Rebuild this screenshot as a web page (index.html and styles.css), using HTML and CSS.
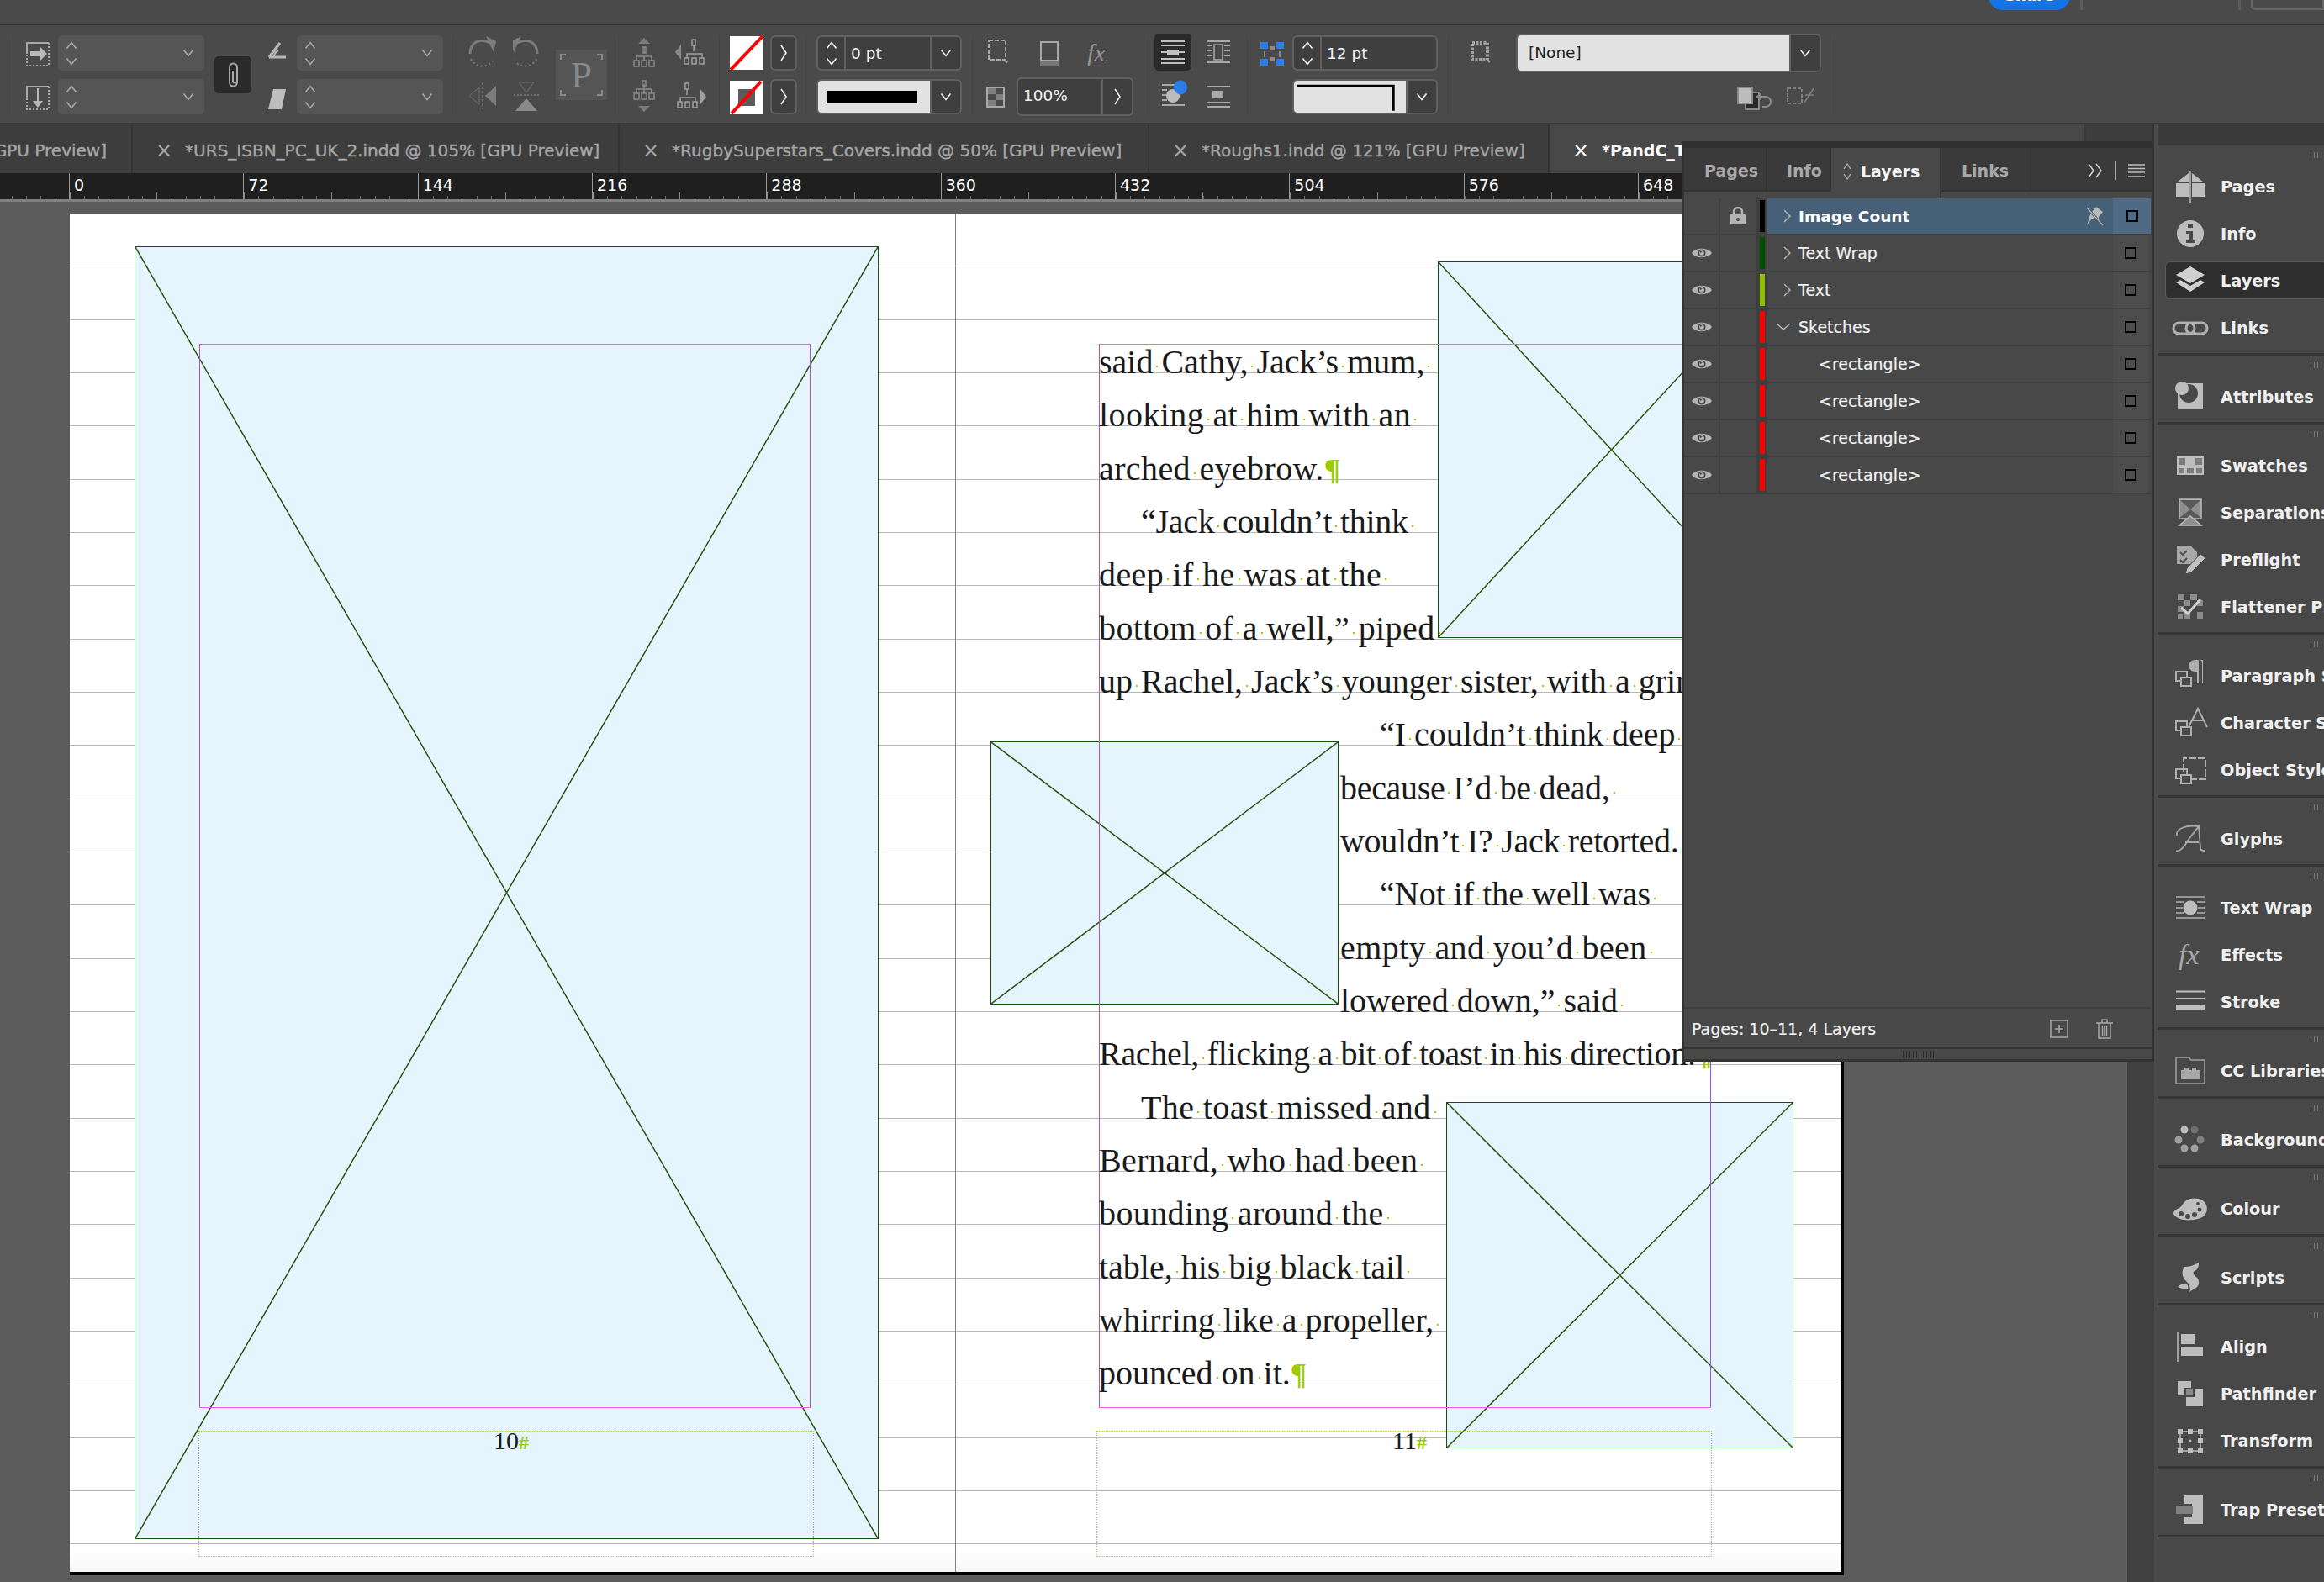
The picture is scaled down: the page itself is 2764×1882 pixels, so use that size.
FILE: index.html
```html
<!DOCTYPE html>
<html lang="en">
<head>
    <meta charset="UTF-8">
    <title>InDesign - Layers</title>
    <link rel="stylesheet" href="styles.css">
</head>
<body>
<svg class="defs" width="0" height="0">
    <symbol id="up" viewBox="0 0 14 10"><path d="M1.5 8.5L7 1.5l5.5 7" fill="none" stroke="currentColor" stroke-width="1.6"/></symbol>
    <symbol id="down" viewBox="0 0 14 10"><path d="M1.5 1.5L7 8.5l5.500-7" fill="none" stroke="currentColor" stroke-width="1.6"/></symbol>
    <symbol id="right" viewBox="0 0 10 22"><path d="M2 2l6 9-6 9" fill="none" stroke="currentColor" stroke-width="1.6"/></symbol>
    <symbol id="eye" viewBox="0 0 24 14"><path d="M0 7C5 0 19 0 24 7 19 14 5 14 0 7z" fill="#b4b4b4"/><circle cx="12" cy="7" r="4.600" fill="#484848"/><circle cx="12" cy="7" r="2.800" fill="#b4b4b4"/><circle cx="10.800" cy="5.800" r="1" fill="#484848"/></symbol>
</svg>

<div class="topbar">
    <div class="share">Share</div>
    <div class="top-div first"></div>
    <div class="top-div second"></div>
    <div class="search"></div>
</div>

<div class="controlbar">
    <div class="grp g1">
        <div class="col w28">
            <svg viewBox="0 0 28 42"><path d="M1 22V9h26" fill="none" stroke="#a8a8a8" stroke-width="2"/><path d="M27 9v27H1V22" fill="none" stroke="#a8a8a8" stroke-width="2" stroke-dasharray="2 2"/><path d="M5 19h12v-5l8 8-8 8v-5H5z" fill="#b8b8b8"/></svg>
            <svg viewBox="0 0 28 42"><path d="M1 22V9h26" fill="none" stroke="#a8a8a8" stroke-width="2"/><path d="M27 9v27H1V22" fill="none" stroke="#a8a8a8" stroke-width="2" stroke-dasharray="2 2"/><path d="M14 11v18" stroke="#b8b8b8" stroke-width="2"/><path d="M8 26h12l-6 8z" fill="#b8b8b8"/></svg>
        </div>
        <div class="col w174 ml10">
            <div class="dd"><div class="step"><svg><use href="#up"/></svg><svg><use href="#down"/></svg></div><svg class="chev"><use href="#down"/></svg></div>
            <div class="dd"><div class="step"><svg><use href="#up"/></svg><svg><use href="#down"/></svg></div><svg class="chev"><use href="#down"/></svg></div>
        </div>
        <div class="link ml12">
            <svg viewBox="0 0 44 44" width="44" height="44"><path d="M18 17v-4a4.500 4.500 0 0 1 9 0v16a2.500 2.500 0 0 1-5 0V17M27 27v4a4.500 4.500 0 0 1-9 0V16" fill="none" stroke="#a8a8a8" stroke-width="2"/></svg>
        </div>
        <div class="col w22 ml20">
            <svg viewBox="0 0 22 42"><path d="M1 26L14 9M1 26h20" fill="none" stroke="#b8b8b8" stroke-width="3"/><path d="M7 25c0-4 2-5 5-7" fill="none" stroke="#b8b8b8" stroke-width="2"/></svg>
            <svg viewBox="0 0 22 42"><path d="M6 12h15l-5 24H0z" fill="#bdbdbd"/></svg>
        </div>
        <div class="col w174 ml12">
            <div class="dd"><div class="step"><svg><use href="#up"/></svg><svg><use href="#down"/></svg></div><svg class="chev"><use href="#down"/></svg></div>
            <div class="dd"><div class="step"><svg><use href="#up"/></svg><svg><use href="#down"/></svg></div><svg class="chev"><use href="#down"/></svg></div>
        </div>
    </div>

    <div class="grp g2">
        <div class="col w35">
            <svg viewBox="0 0 35 42"><path d="M3 22C3 9 14 2 27 9" fill="none" stroke="#7c7c7c" stroke-width="3"/><path d="M22 1l12 6-3 13z" fill="#7c7c7c"/><path d="M4 28a15 15 0 0 0 26 2" fill="none" stroke="#7c7c7c" stroke-width="2" stroke-dasharray="2 3"/></svg>
            <svg viewBox="0 0 35 42"><path d="M18 4v32" stroke="#7c7c7c" stroke-width="1.500" stroke-dasharray="3 2"/><path d="M14 10v20L2 20z" fill="none" stroke="#6e6e6e" stroke-width="1"/><path d="M21 20l13-12v24z" fill="#7c7c7c"/></svg>
        </div>
        <div class="col w32 ml19">
            <svg viewBox="0 0 32 42"><path d="M29 22C29 9 18 2 5 9" fill="none" stroke="#7c7c7c" stroke-width="3"/><path d="M10 1L-2 7 1 20z" fill="#7c7c7c"/><path d="M28 28a15 15 0 0 1-26 2" fill="none" stroke="#7c7c7c" stroke-width="2" stroke-dasharray="2 3"/></svg>
            <svg viewBox="0 0 32 42"><path d="M7 4h18l-9 12z" fill="none" stroke="#6e6e6e" stroke-width="1"/><path d="M1 19h30" stroke="#7c7c7c" stroke-width="1.500" stroke-dasharray="2 2"/><path d="M16 23l13 15H3z" fill="#8a8a8a"/></svg>
        </div>
        <div class="pbox ml19">
            <svg class="corners" viewBox="0 0 61 60"><path d="M6 12V6h6M49 6h6v6M6 48v6h6M55 48v6h-6" fill="none" stroke="#8a8a8a" stroke-width="2"/></svg>
            <span>P</span>
        </div>
    </div>

    <div class="grp g3">
        <div class="col w26">
            <svg viewBox="0 0 26 42"><path d="M13 3l7 7H6z" fill="#7c7c7c"/><path d="M13 14v7M4 30v-5h18v5M13 25v5" fill="none" stroke="#8a8a8a" stroke-width="1.500"/><path d="M11 14h4v7h-4zM1 30h6v7H1zM10 30h6v7h-6zM19 30h6v7h-6z" fill="none" stroke="#8a8a8a" stroke-width="1.500"/></svg>
            <svg viewBox="0 0 26 42"><path d="M13 39l7-7H6z" fill="#7c7c7c"/><path d="M4 17v-5h18v5M13 6v11" fill="none" stroke="#8a8a8a" stroke-width="1.500"/><path d="M11 2h4v6h-4zM1 17h6v7H1zM10 17h6v7h-6zM19 17h6v7h-6z" fill="none" stroke="#8a8a8a" stroke-width="1.500"/></svg>
        </div>
        <div class="col w37 ml24">
            <svg viewBox="0 0 37 42"><path d="M0 20l7-9v18z" fill="#8a8a8a"/><path d="M22 12v7M14 27v-5h18v5" fill="none" stroke="#a0a0a0" stroke-width="1.500"/><path d="M20 5h4v7h-4zM11 27h5v7h-5zM20 27h5v7h-5zM29 27h5v7h-5z" fill="none" stroke="#a0a0a0" stroke-width="1.500"/></svg>
            <svg viewBox="0 0 37 42"><path d="M37 21l-7-9v18z" fill="#a0a0a0"/><path d="M14 12v7M6 27v-5h18v5" fill="none" stroke="#a0a0a0" stroke-width="1.500"/><path d="M12 5h4v7h-4zM3 27h5v7H3zM12 27h5v7h-5zM21 27h5v7h-5z" fill="none" stroke="#a0a0a0" stroke-width="1.500"/></svg>
        </div>
    </div>

    <div class="grp g4">
        <div class="col w40">
            <svg viewBox="0 0 40 42"><rect y="1" width="40" height="40" fill="#fff"/><path d="M1 41L39 1" stroke="#f00" stroke-width="4"/></svg>
            <svg viewBox="0 0 40 42"><rect y="2" width="40" height="40" fill="#fff"/><rect x="10" y="12" width="20" height="20" fill="#5c5c5c"/><path d="M2 41L37 3" stroke="#f00" stroke-width="4"/></svg>
        </div>
        <div class="col w32 ml8">
            <div class="field center"><svg class="arrow"><use href="#right"/></svg></div>
            <div class="field center"><svg class="arrow"><use href="#right"/></svg></div>
        </div>
    </div>

    <div class="grp g5">
        <div class="col w173">
            <div class="field">
                <div class="cell stepcell"><div class="step on"><svg><use href="#up"/></svg><svg><use href="#down"/></svg></div></div>
                <div class="value">0 pt</div>
                <div class="cell chevcell"><svg class="chev on"><use href="#down"/></svg></div>
            </div>
            <div class="field">
                <div class="value light"><span class="strokebar"></span></div>
                <div class="cell chevcell"><svg class="chev on"><use href="#down"/></svg></div>
            </div>
        </div>
    </div>

    <div class="grp g6">
        <div class="col w175">
            <div class="row">
                <svg class="ml2" width="24" viewBox="0 0 24 42"><rect x="1" y="6" width="20" height="23" fill="none" stroke="#a8a8a8" stroke-width="2" stroke-dasharray="5 2"/><path d="M20 31h4l-2 3z" fill="#a8a8a8"/></svg>
                <svg class="ml36" width="26" viewBox="0 0 26 42"><rect x="3" y="8" width="20" height="22" fill="none" stroke="#a8a8a8" stroke-width="2"/><path d="M2 31h22v6H2z" fill="#777"/></svg>
                <span class="fx ml32">fx<small>.</small></span>
            </div>
            <div class="row">
                <svg width="22" viewBox="0 0 22 42"><rect x="1" y="10" width="20" height="23" fill="none" stroke="#a8a8a8" stroke-width="2"/><path d="M2 11h9v7H2zM11 18h9v7h-9zM2 25h9v7H2z" fill="#808080"/></svg>
                <div class="field w139 ml14">
                    <div class="value">100%</div>
                    <div class="cell chevcell"><svg class="arrow"><use href="#right"/></svg></div>
                </div>
            </div>
        </div>
    </div>

    <div class="grp g7">
        <div class="col w44">
            <div class="wrapbtn">
                <svg viewBox="0 0 44 44" width="44" height="44"><path d="M8 9h28M8 35h28M8 14h28M8 30h28" stroke="#c0c0c0" stroke-width="2"/><path d="M15 19h14v6H15z" fill="#c0c0c0"/><path d="M8 22h7M29 22h7" stroke="#c0c0c0" stroke-width="2"/></svg>
            </div>
            <svg viewBox="0 0 44 42"><path d="M9 9h27M9 15h6M9 21h6M9 27h6M9 33h27" stroke="#a8a8a8" stroke-width="2"/><circle cx="22" cy="22" r="8" fill="#bcbcbc"/><ellipse cx="31" cy="12" rx="8" ry="8.500" fill="#2b7de9"/></svg>
        </div>
        <div class="col w28 ml18">
            <svg viewBox="0 0 28 42"><path d="M0 7h28M0 12h7M21 12h7M0 18h7M21 18h7M0 24h7M21 24h7M0 32h28" stroke="#a8a8a8" stroke-width="2"/><rect x="9" y="11" width="10" height="18" fill="none" stroke="#a8a8a8" stroke-width="1.500"/></svg>
            <svg viewBox="0 0 28 42"><path d="M0 9h28M0 28h28M0 33h28" stroke="#a8a8a8" stroke-width="2"/><rect x="7" y="14" width="13" height="9" fill="#a8a8a8"/></svg>
        </div>
    </div>

    <div class="grp g8">
        <div class="col w28">
            <svg viewBox="0 0 28 42"><path d="M0 8h9v8H0zM19 8h9v8h-9zM0 28h9v8H0zM19 28h9v8h-9z" fill="#2b7de9"/><path d="M12 13h5v5h-5zM12 26h5v5h-5z" fill="#8a8a8a"/><path d="M5 19v7M23 19v7" stroke="#8a8a8a" stroke-width="2"/></svg>
        </div>
        <div class="col w173 ml10">
            <div class="field">
                <div class="cell stepcell"><div class="step on"><svg><use href="#up"/></svg><svg><use href="#down"/></svg></div></div>
                <div class="value">12 pt</div>
            </div>
            <div class="field">
                <div class="value light">
                    <svg class="cornerprev" viewBox="0 0 135 38"><path d="M4 6h116v30" fill="none" stroke="#000" stroke-width="3"/></svg>
                </div>
                <div class="cell chevcell"><svg class="chev on"><use href="#down"/></svg></div>
            </div>
        </div>
    </div>

    <div class="grp g9">
        <div class="col w417">
            <div class="row">
                <svg width="24" viewBox="0 0 24 42"><rect x="2" y="9" width="18" height="20" fill="none" stroke="#a0a0a0" stroke-width="4" stroke-dasharray="3 1.500"/><path d="M20 30h4l-2 3z" fill="#a8a8a8"/></svg>
                <div class="field w363 ml30">
                    <div class="value light none">[None]</div>
                    <div class="cell chevcell"><svg class="chev on"><use href="#down"/></svg></div>
                </div>
            </div>
            <div class="row end">
                <svg width="41" viewBox="0 0 41 42"><rect x="10" y="16" width="16" height="20" fill="#2a2a2a" stroke="#8a8a8a" stroke-width="2"/><rect x="1" y="10" width="17" height="19" fill="#bcbcbc" stroke="#8a8a8a" stroke-width="2"/><path d="M24 21h10a6 6 0 0 1 0 12h-4" fill="none" stroke="#8a8a8a" stroke-width="2"/><path d="M29 16l-7 5 7 5z" fill="#8a8a8a"/></svg>
                <svg class="ml18" width="34" viewBox="0 0 34 42"><rect x="1" y="11" width="17" height="18" fill="none" stroke="#808080" stroke-width="2" stroke-dasharray="4 2"/><path d="M21 28l11-17M22 19h10" stroke="#808080" stroke-width="1.500"/></svg>
            </div>
        </div>
    </div>
</div>

<div class="workspace">
    <div class="main">
        <div class="tabs">
            <div class="tab cut"><span>[GPU Preview]</span></div>
            <div class="tab t2"><i>×</i><span>*URS_ISBN_PC_UK_2.indd @ 105% [GPU Preview]</span></div>
            <div class="tab t3"><i>×</i><span>*RugbySuperstars_Covers.indd @ 50% [GPU Preview]</span></div>
            <div class="tab t4"><i>×</i><span>*Roughs1.indd @ 121% [GPU Preview]</span></div>
            <div class="tab active"><i>×</i><span>*PandC_T</span></div>
            <div class="tab spare"></div>
        </div>
        <div class="ruler">
            <div class="rule-start"></div>
            <div class="rule">0</div><div class="rule">72</div><div class="rule">144</div><div class="rule">216</div><div class="rule">288</div>
            <div class="rule">360</div><div class="rule">432</div><div class="rule">504</div><div class="rule">576</div><div class="rule">648</div>
        </div>
        <div class="stage">
            <div class="canvas">
                <div class="page">
                    <div class="frame f-left"><svg viewBox="0 0 100 100" preserveAspectRatio="none"><path d="M0 0L100 100M100 0L0 100" vector-effect="non-scaling-stroke"/></svg></div>
                    <div class="frame f-top"><svg viewBox="0 0 100 100" preserveAspectRatio="none"><path d="M0 0L100 100M100 0L0 100" vector-effect="non-scaling-stroke"/></svg></div>
                    <div class="frame f-mid"><svg viewBox="0 0 100 100" preserveAspectRatio="none"><path d="M0 0L100 100M100 0L0 100" vector-effect="non-scaling-stroke"/></svg></div>
                    <div class="frame f-bot"><svg viewBox="0 0 100 100" preserveAspectRatio="none"><path d="M0 0L100 100M100 0L0 100" vector-effect="non-scaling-stroke"/></svg></div>

                    <div class="spine"></div>
                    <div class="margin m-left"></div>
                    <div class="margin m-right"></div>
                    <div class="folio-box b-left"></div>
                    <div class="folio-box b-right"></div>
                    <div class="folio n-left">10<b>#</b></div>
                    <div class="folio n-right">11<b>#</b></div>

                    <div class="story">
                        <p>said<i> </i>Cathy,<i> </i>Jack’s<i> </i>mum,<i> </i></p>
                        <p class="wide">looking<i> </i>at<i> </i>him<i> </i>with<i> </i>an<i> </i></p>
                        <p class="wide">arched<i> </i>eyebrow.<b>¶</b></p>
                        <p class="ind tight">“Jack<i> </i>couldn’t<i> </i>think<i> </i></p>
                        <p class="wide">deep<i> </i>if<i> </i>he<i> </i>was<i> </i>at<i> </i>the<i> </i></p>
                        <p class="wide">bottom<i> </i>of<i> </i>a<i> </i>well,”<i> </i>piped<i> </i></p>
                        <p>up<i> </i>Rachel,<i> </i>Jack’s<i> </i>younger<i> </i>sister,<i> </i>with<i> </i>a<i> </i>grin,<i> </i></p>
                        <p class="wrap-ind">“I<i> </i>couldn’t<i> </i>think<i> </i>deep<i> </i></p>
                        <p class="wrap tight">because<i> </i>I’d<i> </i>be<i> </i>dead,<i> </i></p>
                        <p class="wrap tight">wouldn’t<i> </i>I?<i> </i>Jack<i> </i>retorted.<i> </i></p>
                        <p class="wrap-ind">“Not<i> </i>if<i> </i>the<i> </i>well<i> </i>was<i> </i></p>
                        <p class="wrap wide">empty<i> </i>and<i> </i>you’d<i> </i>been<i> </i></p>
                        <p class="wrap">lowered<i> </i>down,”<i> </i>said<i> </i></p>
                        <p class="tight">Rachel,<i> </i>flicking<i> </i>a<i> </i>bit<i> </i>of<i> </i>toast<i> </i>in<i> </i>his<i> </i>direction.<b>¶</b></p>
                        <p class="ind wide">The<i> </i>toast<i> </i>missed<i> </i>and<i> </i></p>
                        <p class="wide">Bernard,<i> </i>who<i> </i>had<i> </i>been<i> </i></p>
                        <p class="wide">bounding<i> </i>around<i> </i>the<i> </i></p>
                        <p>table,<i> </i>his<i> </i>big<i> </i>black<i> </i>tail<i> </i></p>
                        <p>whirring<i> </i>like<i> </i>a<i> </i>propeller,<i> </i></p>
                        <p>pounced<i> </i>on<i> </i>it.<b>¶</b></p>
                    </div>
                </div>
            </div>
            <div class="scrollstrip"></div>
        </div>
    </div>

    <div class="dock">
        <div class="dock-head"></div>
        <div class="dgroup">
            <div class="ditem"><svg viewBox="0 0 42 42"><path d="M4 33V17h15v16zM23 33V17h15v16zM6 15l13-10v10zM36 15L23 5v10z" fill="#bdbdbd"/><path d="M21 2v38" stroke="#bdbdbd" stroke-width="1.500"/></svg>Pages</div>
            <div class="ditem"><svg viewBox="0 0 42 42"><circle cx="21" cy="21" r="16" fill="#bdbdbd"/><path d="M18 9h6v5h-6zM16 18h8v11h3v3H16v-3h3v-8h-3z" fill="#484848"/></svg>Info</div>
            <div class="ditem on"><svg viewBox="0 0 42 42"><path d="M21 4l17 10-17 10L4 14z" fill="#d0d0d0"/><path d="M9 20l12 7 12-7 5 3-17 11L4 23z" fill="#d0d0d0"/></svg>Layers</div>
            <div class="ditem"><svg viewBox="0 0 42 42"><rect x="1" y="15" width="25" height="13" rx="6.500" fill="none" stroke="#b0b0b0" stroke-width="3"/><rect x="16" y="15" width="25" height="13" rx="6.500" fill="none" stroke="#b0b0b0" stroke-width="3"/></svg>Links</div>
        </div>
        <div class="dgroup">
            <div class="ditem"><svg viewBox="0 0 42 42"><rect x="6" y="5" width="30" height="31" fill="#bdbdbd"/><circle cx="19" cy="17" r="11" fill="#484848"/><path d="M0 0h12v6H6v6H0z" fill="#484848"/><circle cx="11" cy="11" r="8" fill="#bdbdbd"/></svg>Attributes</div>
        </div>
        <div class="dgroup">
            <div class="ditem"><svg viewBox="0 0 42 42"><rect x="5" y="10" width="32" height="22" fill="#bdbdbd"/><path d="M7 12h8v8H7zM27 12h8v8h-8zM7 24h7v6H7zM17 24h8v6h-8zM28 24h7v6h-7z" fill="#7c7c7c"/></svg>Swatches</div>
            <div class="ditem"><svg viewBox="0 0 42 42"><path d="M8 5h26v22H8z" fill="#8f8f8f" stroke="#bdbdbd" stroke-width="1.500"/><path d="M9 6l12 11L33 6zM8 27l13-10 13 10" fill="#5a5a5a"/><path d="M8 36l13-11 13 11z" fill="#8f8f8f" stroke="#bdbdbd" stroke-width="1.500"/></svg>Separations</div>
            <div class="ditem"><svg viewBox="0 0 42 42"><path d="M5 4h16l8 8v14H5z" fill="#a8a8a8"/><path d="M9 12l3 3 5-5M9 21l3 3 5-5" fill="none" stroke="#484848" stroke-width="1.800"/><path d="M33 14l6 5-17 17-7 2 2-7z" fill="#c0c0c0" stroke="#484848" stroke-width="1"/></svg>Preflight</div>
            <div class="ditem"><svg viewBox="0 0 42 42"><path d="M6 6h8v7H6zM21 6h8v7h-8zM14 13h7v7h-7zM29 13h7v7h-7zM6 20h8v7H6zM14 27h7v8h-7zM29 27h7v8h-7zM6 30h6v5H6z" fill="#8a8a8a"/><path d="M10 22l8 7 15-17" fill="none" stroke="#d0d0d0" stroke-width="3"/></svg>Flattener Preview</div>
        </div>
        <div class="dgroup">
            <div class="ditem"><svg viewBox="0 0 42 42"><rect x="4" y="16" width="13" height="11" fill="none" stroke="#b0b0b0" stroke-width="2"/><rect x="10" y="23" width="12" height="10" fill="#484848" stroke="#b0b0b0" stroke-width="2"/><path d="M27 2h4v28h-2V16h-2c-10 0-10-14 0-14zM33 2h3v28h-1V4z" fill="#b0b0b0"/></svg>Paragraph Styles</div>
            <div class="ditem"><svg viewBox="0 0 42 42"><rect x="4" y="19" width="13" height="11" fill="none" stroke="#b0b0b0" stroke-width="2"/><rect x="10" y="26" width="12" height="10" fill="#484848" stroke="#b0b0b0" stroke-width="2"/><path d="M19 26L30 4l11 22M23 18h14" fill="none" stroke="#b0b0b0" stroke-width="2"/></svg>Character Styles</div>
            <div class="ditem"><svg viewBox="0 0 42 42"><path d="M13 23V7h26v25H22" fill="none" stroke="#b0b0b0" stroke-width="2" stroke-dasharray="9 2"/><rect x="4" y="20" width="13" height="11" fill="none" stroke="#b0b0b0" stroke-width="2"/><rect x="10" y="27" width="12" height="10" fill="#484848" stroke="#b0b0b0" stroke-width="2"/></svg>Object Styles</div>
        </div>
        <div class="dgroup">
            <div class="ditem"><svg viewBox="0 0 42 42"><path d="M5 17C3 9 16 4 31 6M4 35c5 2 10-5 14-12L31 6l2 26c0 2 2 3 5 3M15 25h16" fill="none" stroke="#a8a8a8" stroke-width="1.800"/></svg>Glyphs</div>
        </div>
        <div class="dgroup">
            <div class="ditem"><svg viewBox="0 0 42 42"><path d="M4 8h34M4 33h34M4 14h9M29 14h9M4 21h8M30 21h8M4 27h9M29 27h9" stroke="#b0b0b0" stroke-width="1.500"/><circle cx="21" cy="21" r="8.500" fill="#bdbdbd"/></svg>Text Wrap</div>
            <div class="ditem"><svg viewBox="0 0 42 42"><text class="glyph small" x="7" y="32">fx</text></svg>Effects</div>
            <div class="ditem"><svg viewBox="0 0 42 42"><path d="M4 8.500h34M4 17h34" stroke="#bdbdbd" stroke-width="2"/><path d="M4 27h34" stroke="#bdbdbd" stroke-width="6"/></svg>Stroke</div>
        </div>
        <div class="dgroup">
            <div class="ditem"><svg viewBox="0 0 42 42"><path d="M4 36V5h15l3 3h16v28z" fill="none" stroke="#a0a0a0" stroke-width="1.500"/><path d="M10 31V20h4v-3h5v3h4v-3h5v3h5v11z" fill="#a8a8a8"/></svg>CC Libraries</div>
        </div>
        <div class="dgroup">
            <div class="ditem"><svg viewBox="0 0 42 42"><circle cx="14" cy="9" r="4.500" fill="#bdbdbd"/><circle cx="26" cy="9" r="4.500" fill="#6e6e6e"/><circle cx="7" cy="21" r="4.500" fill="#a0a0a0"/><circle cx="33" cy="21" r="4.500" fill="#808080"/><circle cx="14" cy="31" r="4.500" fill="#a0a0a0"/><circle cx="26" cy="31" r="4.500" fill="#a0a0a0"/></svg>Background Tasks</div>
        </div>
        <div class="dgroup">
            <div class="ditem"><svg viewBox="0 0 42 42"><path d="M1 27c0-6 8-6 10-10 3-7 12-10 20-8 11 3 12 14 7 20-7 7-33 8-37-2z" fill="#bdbdbd"/><circle cx="10" cy="27" r="3" fill="#484848"/><circle cx="18" cy="30" r="3" fill="#484848"/><circle cx="26" cy="28" r="3" fill="#484848"/><circle cx="32" cy="22" r="2.500" fill="#484848"/><circle cx="30" cy="15" r="2" fill="#484848"/></svg>Colour</div>
        </div>
        <div class="dgroup">
            <div class="ditem"><svg viewBox="0 0 42 42"><path d="M14 8c6 0 12-2 17-5 0 5-1 8-5 10-3 2-1 5 3 8 3 3 3 9-1 12-3 2-6 3-8 5 2-5 0-9-4-13-5-5-6-11-2-17z" fill="#bdbdbd"/><path d="M6 32c3-3 7-5 11-4 1 3 2 5 1 7-4-1-8-1-12-3z" fill="#bdbdbd"/></svg>Scripts</div>
        </div>
        <div class="dgroup">
            <div class="ditem"><svg viewBox="0 0 42 42"><path d="M6 3v36" stroke="#bdbdbd" stroke-width="1.500"/><rect x="10" y="6" width="16" height="12" fill="#bdbdbd"/><rect x="10" y="21" width="26" height="11" fill="#bdbdbd"/></svg>Align</div>
            <div class="ditem"><svg viewBox="0 0 42 42"><path d="M6 6h16v8h-8v9H6z" fill="#bdbdbd"/><path d="M16 15h8v8h-8z" fill="#8a8a8a"/><path d="M26 15h10v21H16V25h10z" fill="#bdbdbd"/></svg>Pathfinder</div>
            <div class="ditem"><svg viewBox="0 0 42 42"><rect x="9" y="10" width="24" height="23" fill="none" stroke="#bdbdbd" stroke-width="1.500"/><path d="M6 7h6v6H6zM18 7h6v6h-6zM30 7h6v6h-6zM6 18h6v6H6zM30 18h6v6h-6zM6 30h6v6H6zM18 30h6v6h-6zM30 30h6v6h-6z" fill="#bdbdbd"/><circle cx="21" cy="21" r="1.500" fill="#bdbdbd"/></svg>Transform</div>
        </div>
        <div class="dgroup">
            <div class="ditem"><svg viewBox="0 0 42 42"><path d="M14 4h22v34H14v-8h9v-16h-9z" fill="#bdbdbd"/><rect x="4" y="16" width="20" height="10" fill="#808080"/></svg>Trap Presets</div>
        </div>
    </div>
</div>

<!-- floating layers panel, sits over the spread -->
<div class="panel">
    <div class="panel-strip"></div>
    <div class="ptabs">
        <div class="ptab p-pages">Pages</div>
        <div class="ptab p-info">Info</div>
        <div class="ptab p-layers">
            <svg width="10" height="22" viewBox="0 0 10 22"><path d="M1 8l4-6 4 6M1 14l4 6 4-6" fill="none" stroke="#b0b0b0" stroke-width="1.300"/></svg>
            Layers
        </div>
        <div class="ptab p-links">Links</div>
        <div class="ptab p-rest">
            <svg width="18" height="22" viewBox="0 0 18 22"><path d="M1 3l6 8-6 8M10 3l6 8-6 8" fill="none" stroke="#d0d0d0" stroke-width="1.500"/></svg>
            <span class="pbar"></span>
            <svg width="20" height="16" viewBox="0 0 20 16"><path d="M0 1h20M0 5.500h20M0 10h20M0 15h20" stroke="#c0c0c0" stroke-width="1.500"/></svg>
        </div>
    </div>
    <div class="rows">
        <div class="lrow sel">
            <div class="lcell eye"></div>
            <div class="lcell lock"><svg width="18" height="22" viewBox="0 0 18 22"><path d="M4 10V6a5 5 0 0 1 10 0v4" fill="none" stroke="#b4b4b4" stroke-width="2.400"/><rect y="9" width="18" height="12" rx="1" fill="#b4b4b4"/><circle cx="9" cy="15" r="2" fill="#484848"/></svg></div>
            <div class="lcell colour"><span class="black"></span></div>
            <div class="lname"><svg class="tw" viewBox="0 0 37 20"><path d="M20 3l7 7-7 7" fill="none" stroke="#b8b8b8" stroke-width="1.400"/></svg><strong>Image Count</strong>
                <svg class="nopin" width="21" height="24" viewBox="0 0 21 24"><path d="M12 1l8 6-5 6 0 4-8-2-6 8 3-10 2-5z" fill="#b8b8b8"/><path d="M1 2l19 21" stroke="#466078" stroke-width="3"/><path d="M1 2l19 21" stroke="#b8b8b8" stroke-width="1.200"/></svg>
            </div>
            <div class="lbox"><span></span></div>
        </div>
        <div class="lrow">
            <div class="lcell eye"><svg width="24" height="14"><use href="#eye"/></svg></div>
            <div class="lcell lock"></div>
            <div class="lcell colour"><span class="dkgreen"></span></div>
            <div class="lname"><svg class="tw" viewBox="0 0 37 20"><path d="M20 3l7 7-7 7" fill="none" stroke="#b8b8b8" stroke-width="1.400"/></svg>Text Wrap</div>
            <div class="lbox"><span></span></div>
        </div>
        <div class="lrow">
            <div class="lcell eye"><svg width="24" height="14"><use href="#eye"/></svg></div>
            <div class="lcell lock"></div>
            <div class="lcell colour"><span class="lime"></span></div>
            <div class="lname"><svg class="tw" viewBox="0 0 37 20"><path d="M20 3l7 7-7 7" fill="none" stroke="#b8b8b8" stroke-width="1.400"/></svg>Text</div>
            <div class="lbox"><span></span></div>
        </div>
        <div class="lrow">
            <div class="lcell eye"><svg width="24" height="14"><use href="#eye"/></svg></div>
            <div class="lcell lock"></div>
            <div class="lcell colour"><span class="red"></span></div>
            <div class="lname"><svg class="tw" viewBox="0 0 37 20"><path d="M11 6l8 7 8-7" fill="none" stroke="#b8b8b8" stroke-width="1.400"/></svg>Sketches</div>
            <div class="lbox"><span></span></div>
        </div>
        <div class="lrow">
            <div class="lcell eye"><svg width="24" height="14"><use href="#eye"/></svg></div>
            <div class="lcell lock"></div>
            <div class="lcell colour"><span class="red"></span></div>
            <div class="lname sub">&lt;rectangle&gt;</div>
            <div class="lbox"><span></span></div>
        </div>
        <div class="lrow">
            <div class="lcell eye"><svg width="24" height="14"><use href="#eye"/></svg></div>
            <div class="lcell lock"></div>
            <div class="lcell colour"><span class="red"></span></div>
            <div class="lname sub">&lt;rectangle&gt;</div>
            <div class="lbox"><span></span></div>
        </div>
        <div class="lrow">
            <div class="lcell eye"><svg width="24" height="14"><use href="#eye"/></svg></div>
            <div class="lcell lock"></div>
            <div class="lcell colour"><span class="red"></span></div>
            <div class="lname sub">&lt;rectangle&gt;</div>
            <div class="lbox"><span></span></div>
        </div>
        <div class="lrow">
            <div class="lcell eye"><svg width="24" height="14"><use href="#eye"/></svg></div>
            <div class="lcell lock"></div>
            <div class="lcell colour"><span class="red"></span></div>
            <div class="lname sub">&lt;rectangle&gt;</div>
            <div class="lbox"><span></span></div>
        </div>
    </div>
    <div class="pfoot">
        <span>Pages: 10–11, 4 Layers</span>
        <svg class="newlayer" width="22" height="22" viewBox="0 0 22 22"><rect x="1" y="1" width="20" height="20" fill="none" stroke="#a8a8a8" stroke-width="1.500"/><path d="M11 6v10M6 11h10" stroke="#a8a8a8" stroke-width="1.500"/></svg>
        <svg class="trash" width="20" height="24" viewBox="0 0 20 24"><path d="M0 5h20M7 5V1h6v4" fill="none" stroke="#a8a8a8" stroke-width="1.500"/><path d="M3 5v18h14V5M7.500 8v12M10 8v12M12.500 8v12" fill="none" stroke="#a8a8a8" stroke-width="1.500"/></svg>
    </div>
    <div class="pgrip"><span></span></div>
</div>
</body>
</html>
```

FILE: styles.css
```css
* {
    box-sizing: border-box;
}

html, body {
    margin: 0;
    width: 2764px;
    height: 1882px;
    overflow: hidden;
}

body {
    position: relative;
    background: #4a4a4a;
    font-family: "DejaVu Sans", sans-serif;
    color: #f0f0f0;
    display: flex;
    flex-direction: column;
}

.defs {
    position: absolute;
}

/* top strip */
.topbar {
    height: 30px;
    flex: none;
    display: flex;
    overflow: hidden;
    background: #4a4a4a;
    border-bottom: 2px solid #333;
}

.share {
    width: 101px;
    height: 34px;
    margin: -22px 0 0 2365px;
    background: #1473e6;
    border-radius: 17px;
    font-size: 18px;
    font-weight: bold;
    line-height: 34px;
    text-align: center;
    color: #fff;
}

.top-div {
    width: 3px;
    height: 12px;
    background: #5c5c5c;
}

.top-div.first {
    margin-left: 12px;
}

.top-div.second {
    margin-left: 185px;
}

.search {
    width: 90px;
    height: 12px;
    margin-left: 12px;
    border: 2px solid #666;
    border-top: 0;
    border-radius: 0 0 0 5px;
}

/* control panel */
.controlbar {
    height: 118px;
    flex: none;
    display: flex;
    padding: 12px 0 0 15px;
    background: #4a4a4a;
    border-bottom: 2px solid #393939;
}

.grp {
    height: 94px;
    display: flex;
    border-left: 1px solid #444;
}

.g1 { width: 523px; padding-left: 15px; }
.g2 { width: 193px; padding-left: 17px; }
.g3 { width: 124px; padding-left: 21px; }
.g4 { width: 103px; padding-left: 12px; }
.g5 { width: 198px; padding-left: 12px; }
.g6 { width: 204px; padding-left: 16px; }
.g7 { width: 123px; padding-left: 12px; }
.g8 { width: 239px; padding-left: 15px; }
.g9 { width: 455px; padding-left: 26px; border-right: 1px solid #444; }

.col {
    display: flex;
    flex-direction: column;
    gap: 10px;
    flex: none;
}

.col > * {
    height: 42px;
    flex: none;
}

.w22 { width: 22px; }
.w26 { width: 26px; }
.w28 { width: 28px; }
.w32 { width: 32px; }
.w35 { width: 35px; }
.w37 { width: 37px; }
.w40 { width: 40px; }
.w44 { width: 44px; }
.w139 { width: 139px; }
.w173 { width: 173px; }
.w174 { width: 174px; }
.w175 { width: 175px; }
.w363 { width: 363px; }
.w417 { width: 417px; }

.ml2 { margin-left: 2px; }
.ml8 { margin-left: 8px; }
.ml10 { margin-left: 10px; }
.ml12 { margin-left: 12px; }
.ml14 { margin-left: 14px; }
.ml18 { margin-left: 18px; }
.ml19 { margin-left: 19px; }
.ml20 { margin-left: 20px; }
.ml24 { margin-left: 24px; }
.ml30 { margin-left: 30px; }
.ml32 { margin-left: 32px; }
.ml36 { margin-left: 36px; }

.dd {
    display: flex;
    align-items: center;
    justify-content: space-between;
    padding: 0 12px 0 9px;
    background: #555;
    border-radius: 5px;
}

.step {
    display: flex;
    flex-direction: column;
    gap: 9px;
    color: #a8a8a8;
}

.step.on {
    color: #eee;
}

.step svg {
    width: 14px;
    height: 10px;
    display: block;
}

.chev {
    width: 14px;
    height: 10px;
    color: #a8a8a8;
}

.chev.on {
    color: #eee;
}

.arrow {
    width: 10px;
    height: 22px;
    color: #eee;
}

.link {
    width: 44px;
    height: 44px;
    align-self: center;
    flex: none;
    background: #2a2a2a;
    border-radius: 5px;
}

.pbox {
    position: relative;
    width: 61px;
    height: 60px;
    align-self: center;
    flex: none;
    background: #555;
    font-family: "Liberation Serif", serif;
    font-size: 45px;
    line-height: 60px;
    text-align: center;
    color: #8a8a8a;
}

.corners {
    position: absolute;
    left: 0;
    top: 0;
    width: 61px;
    height: 60px;
}

.field {
    display: flex;
    background: #3f3f3f;
    border: 2px solid #606060;
    border-radius: 6px;
    overflow: hidden;
}

.field.center {
    align-items: center;
    justify-content: center;
}

.cell {
    flex: none;
    display: flex;
    align-items: center;
    justify-content: center;
    border-left: 2px solid #606060;
}

.stepcell {
    width: 33px;
    border-left: 0;
    border-right: 2px solid #606060;
}

.chevcell {
    width: 36px;
    background: #3f3f3f;
}

.value {
    flex: 1;
    min-width: 0;
    padding-left: 6px;
    font-size: 18.5px;
    line-height: 40px;
    color: #f2f2f2;
}

.value.light {
    display: flex;
    align-items: center;
    padding-left: 0;
    background: #e2e2e2;
    color: #222;
}

.value.none {
    padding-left: 13px;
}

.strokebar {
    width: 108px;
    height: 15px;
    margin-left: 10px;
    background: #000;
}

.cornerprev {
    width: 135px;
    height: 38px;
}

.row {
    display: flex;
    align-items: center;
}

.row svg {
    height: 42px;
    flex: none;
}

.row.end {
    justify-content: flex-end;
    padding-right: 7px;
}

.fx {
    font-family: "Liberation Serif", serif;
    font-style: italic;
    font-size: 30px;
    color: #969696;
}

.fx small {
    font-size: 14px;
}

.wrapbtn {
    background: #2a2a2a;
    border-radius: 5px;
    margin-top: -2px;
    height: 44px !important;
}

.wrapbtn + svg {
    margin-top: -2px;
}

/* document area */
.workspace {
    flex: 1;
    display: flex;
    min-height: 0;
}

.main {
    width: 2562px;
    flex: none;
    display: flex;
    flex-direction: column;
}

.tabs {
    height: 58px;
    flex: none;
    display: flex;
    background: #484848;
}

.tab {
    flex: none;
    display: flex;
    align-items: center;
    gap: 15px;
    padding: 3px 0 0 27px;
    overflow: hidden;
    white-space: nowrap;
    background: #3d3d3d;
    border-right: 2px solid #333;
    font-size: 20px;
    color: #a6a6a6;
    -webkit-text-stroke: 0.4px #a6a6a6;
}

.tab i {
    font-style: normal;
    font-size: 24px;
    line-height: 1;
    font-weight: normal;
    -webkit-text-stroke: 0;
}

.tab.cut {
    width: 158px;
    padding: 3px 29px 0 0;
    justify-content: flex-end;
}

.t2 { width: 579px; }
.t3 { width: 630px; }
.t4 { width: 476px; }

.tab.active {
    width: 638px;
    background: #484848;
    color: #fff;
    border-right-color: #3a3a3a;
    font-size: 19px;
    font-weight: bold;
    -webkit-text-stroke: 0;
}

.tab.spare {
    width: 81px;
    padding: 0;
}

.ruler {
    height: 34px;
    flex: none;
    display: flex;
    overflow: hidden;
    background-color: #1f1f1f;
    background-image:
        repeating-linear-gradient(90deg, #8c8c8c 0 1px, transparent 1px 103.67px),
        repeating-linear-gradient(90deg, #6e6e6e 0 1px, transparent 1px 17.28px);
    background-size: 100% 8px, 100% 4px;
    background-repeat: no-repeat;
    background-position: -21px bottom, -21px bottom;
    border-bottom: 3px solid #808080;
}

.rule-start {
    width: 82px;
    flex: none;
}

.rule {
    width: 207.33px;
    flex: none;
    padding-left: 5px;
    border-left: 1px solid #9a9a9a;
    font-size: 19px;
    line-height: 29px;
    color: #fff;
}

.stage {
    flex: 1;
    display: flex;
    min-height: 0;
}

.canvas {
    flex: 1;
    padding: 14px 0 0 83px;
    overflow: hidden;
    background: #5c5c5c;
}

.scrollstrip {
    width: 32px;
    flex: none;
    background: #404040;
}

.page {
    position: relative;
    width: 2110px;
    height: 1620px;
    background-color: #fff;
    background-image:
        linear-gradient(180deg, transparent 1590px, rgba(0, 0, 0, 0.03) 1616px),
        repeating-linear-gradient(180deg, transparent 0 62.33px, #b8b8b8 62.33px 63.33px);
    border-right: 3px solid #000;
    border-bottom: 4px solid #000;
    font-family: "Liberation Serif", serif;
    color: #1a1a1a;
}

.frame {
    position: absolute;
    background: #e5f4fd;
    border: 1.5px solid #14500f;
}

.frame svg {
    display: block;
    width: 100%;
    height: 100%;
    fill: none;
    stroke: #2a5410;
    stroke-width: 1.5px;
}

.f-left { left: 77px; top: 39px; width: 885px; height: 1538px; }
.f-top { left: 1627px; top: 57px; width: 413px; height: 448px; }
.f-mid { left: 1095px; top: 628px; width: 414px; height: 313px; }
.f-bot { left: 1637px; top: 1057px; width: 413px; height: 412px; }

.spine {
    position: absolute;
    left: 1053px;
    top: 0;
    bottom: 0;
    width: 1px;
    background: #808080;
}

.margin {
    position: absolute;
    top: 155px;
    height: 1266px;
    border-style: solid;
    border-width: 1.5px;
    border-color: #f25cf2 #a24ff0;
}

.m-left { left: 154px; width: 727px; }
.m-right { left: 1224px; width: 728px; }

.folio-box {
    position: absolute;
    top: 1448px;
    width: 732px;
    height: 150px;
    border: 1px dotted #a8d400;
}

.b-left { left: 153px; }
.b-right { left: 1221px; }

.folio {
    position: absolute;
    top: 1442px;
    font-size: 30px;
    line-height: 36px;
}

.folio b {
    font-weight: bold;
    font-size: 24px;
    color: #9ccc00;
}

.n-left { left: 504px; }
.n-right { left: 1573px; }

.story {
    position: absolute;
    left: 1224px;
    top: 145px;
    font-size: 40px;
    line-height: 63.33px;
}

.story p {
    margin: 0;
    height: 63.33px;
    white-space: nowrap;
}

.story .ind { padding-left: 50px; }
.story .wrap { padding-left: 287px; }
.story .wrap-ind { padding-left: 334px; }
.story .wide { letter-spacing: 0.4px; }
.story .tight { letter-spacing: -0.3px; }

.story i {
    position: relative;
    font-style: normal;
}

.story i::after {
    content: "";
    position: absolute;
    left: 4px;
    bottom: 16px;
    width: 2px;
    height: 2px;
    background: #9ccc00;
}

.story b {
    font-weight: bold;
    font-size: 36px;
    color: #9ccc00;
}

/* right dock */
.dock {
    width: 198px;
    flex: none;
    margin-left: 4px;
    overflow: hidden;
    white-space: nowrap;
    background: #484848;
    font-size: 19.3px;
    font-weight: bold;
}

.dock-head {
    height: 25px;
    background: #3a3a3a;
}

.dgroup {
    position: relative;
    padding: 21px 0 2px;
    border-bottom: 3px solid #363636;
}

.dgroup::before {
    content: "";
    position: absolute;
    right: 2px;
    top: 8px;
    width: 14px;
    height: 7px;
    background: repeating-linear-gradient(90deg, #7a7a7a 0 1.5px, transparent 1.5px 4px);
}

.ditem {
    height: 56px;
    display: flex;
    align-items: center;
    gap: 15px;
    padding-left: 18px;
    color: #f0f0f0;
}

.ditem svg {
    width: 42px;
    height: 42px;
    flex: none;
    overflow: visible;
}

.ditem.on {
    position: relative;
    z-index: 0;
}

.ditem.on::before {
    content: "";
    position: absolute;
    z-index: -1;
    left: 9px;
    right: -4px;
    top: 5px;
    bottom: 6px;
    background: #2e2e2e;
    border: 1px solid #5a5a5a;
    border-radius: 6px;
}

.glyph {
    font-family: "Liberation Serif", serif;
    font-style: italic;
    font-size: 38px;
    font-weight: normal;
    fill: #a8a8a8;
}

.glyph.small {
    font-size: 34px;
}

/* layers panel */
.panel {
    position: absolute;
    left: 2000px;
    top: 168px;
    width: 562px;
    height: 1095px;
    display: flex;
    flex-direction: column;
    background: #484848;
    border-left: 3px solid #333;
    border-right: 2px solid #333;
    font-size: 19px;
    -webkit-text-stroke: 0.2px;
}

.panel-strip {
    height: 8px;
    flex: none;
    background: #303030;
    margin-left: -3px;
}

.ptabs {
    height: 60px;
    flex: none;
    display: flex;
    align-items: flex-start;
}

.ptab {
    height: 52px;
    flex: none;
    display: flex;
    align-items: center;
    background: #3a3a3a;
    border-right: 2px solid #333;
    border-bottom: 2px solid #333;
    font-weight: bold;
    color: #a8a8a8;
    -webkit-text-stroke: 0;
    padding-top: 3px;
}

.p-pages { width: 99px; padding-left: 24px; }
.p-info { width: 76px; padding-left: 23px; }

.p-layers {
    width: 131px;
    height: 60px;
    padding: 3px 0 8px 14px;
    gap: 11px;
    background: #484848;
    border-bottom: 0;
    color: #f4f4f4;
}

.p-links { width: 107px; padding-left: 24px; }

.p-rest {
    flex: 1;
    padding-left: 67px;
    border-right: 0;
}

.pbar {
    width: 1px;
    height: 22px;
    margin: 0 14px 0 15px;
    background: #aaa;
}

.rows {
    flex: 1;
    min-height: 0;
    border-bottom: 2px solid #3e3e3e;
    margin-right: 2px;
}

.lrow {
    height: 44px;
    display: flex;
    border-bottom: 2px solid #3e3e3e;
}

.lcell {
    flex: none;
    display: flex;
    align-items: center;
    justify-content: center;
    border-right: 2px solid #3e3e3e;
}

.lcell.eye { width: 43px; }
.lcell.lock { width: 44px; }

.lcell.colour {
    width: 12px;
    padding: 2px 3px;
    align-items: stretch;
    border-right: 0;
    background: #3e3e3e;
}

.colour span {
    width: 6px;
}

.black { background: #000; }
.dkgreen { background: #004f00; }
.lime { background: #8fbf00; }
.red { background: #f00; }

.lname {
    flex: 1;
    min-width: 0;
    display: flex;
    align-items: center;
    color: #f0f0f0;
}

.lname.sub {
    padding-left: 61px;
}

.tw {
    width: 37px;
    height: 20px;
    flex: none;
}

.lname strong {
    flex: 1;
    font-size: 18.5px;
    color: #fff;
    -webkit-text-stroke: 0;
}

.nopin {
    margin-right: 11px;
}

.lbox {
    width: 42px;
    flex: none;
    display: flex;
    align-items: center;
    justify-content: center;
    background: #4d4d4d;
    margin-right: 3px;
}

.lbox span {
    width: 14px;
    height: 14px;
    border: 2px solid #000;
}

.sel {
    background: #466078;
}

.sel .lname {
    background: #466078;
}

.sel .lcell {
    background: #484848;
}

.sel .lcell.colour {
    background: #3e3e3e;
}

.sel .lbox {
    background: #4e6a84;
    margin-right: 0;
    width: 45px;
}

.pfoot {
    height: 48px;
    flex: none;
    display: flex;
    align-items: center;
    padding: 3px 0 0 9px;
    font-size: 19px;
    color: #f0f0f0;
    border-bottom: 3px solid #333;
}

.pfoot span {
    flex: 1;
}

.trash {
    margin: 0 47px 0 33px;
}

.pgrip {
    height: 15px;
    flex: none;
    display: flex;
    align-items: center;
    justify-content: center;
    border-bottom: 3px solid #333;
}

.pgrip span {
    width: 38px;
    height: 9px;
    background: repeating-linear-gradient(90deg, #2c2c2c 0 1.5px, transparent 1.5px 4px);
}
```
